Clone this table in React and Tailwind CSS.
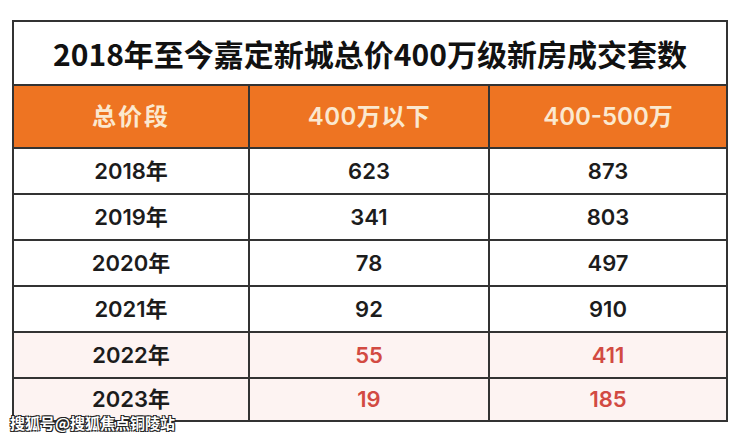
import React from "react";

const rows = [
  { y: "2018年", a: "623", b: "873" },
  { y: "2019年", a: "341", b: "803" },
  { y: "2020年", a: "78", b: "497" },
  { y: "2021年", a: "92", b: "910" },
  { y: "2022年", a: "55", b: "411", hl: true },
  { y: "2023年", a: "19", b: "185", hl: true, last: true },
];

const cellFont = { fontFamily: 'Inter, "Noto Sans CJK SC", sans-serif' };

export default function App() {
  return (
    <div
      className="relative w-[740px] h-[442px] bg-white overflow-hidden"
      style={{ fontFamily: '"Noto Sans CJK SC", "Noto Sans", sans-serif' }}
    >
      <div className="ml-[12px] mt-[20px] w-[716px] border-2 border-[#333]">
        <div className="h-[64px] flex items-center justify-center border-b-2 border-[#333] text-[30px] font-bold text-[#111]">
          2018年至今嘉定新城总价400万级新房成交套数
        </div>
        <div
          className="grid grid-cols-[236px_240px_236px] h-[63px] bg-[#ee7422] border-b-2 border-[#333] text-[24px] font-semibold text-[#fbe8cf]"
          style={cellFont}
        >
          <div className="flex items-center justify-center border-r-2 border-[#333] tracking-[2px]">总价段</div>
          <div className="flex items-center justify-center border-r-2 border-[#333] tracking-[0.5px]">400万以下</div>
          <div className="flex items-center justify-center">400-500万</div>
        </div>
        {rows.map((r) => (
          <div
            key={r.y}
            style={cellFont}
            className={`grid grid-cols-[236px_240px_236px] text-[22px] font-semibold ${
              r.last ? "h-[41px]" : "h-[46px] border-b-2 border-[#333]"
            } ${r.hl ? "bg-[#fdf3f2]" : "bg-white"}`}
          >
            <div className="flex items-center justify-center border-r-2 border-[#333] text-[#1c1c1c]">{r.y}</div>
            <div
              className={`flex items-center justify-center border-r-2 border-[#333] ${
                r.hl ? "text-[#d24a42]" : "text-[#1c1c1c]"
              }`}
            >
              {r.a}
            </div>
            <div className={`flex items-center justify-center ${r.hl ? "text-[#d24a42]" : "text-[#1c1c1c]"}`}>
              {r.b}
            </div>
          </div>
        ))}
      </div>
      <div
        className="absolute left-[10px] top-[415px] text-[15px] font-bold text-white leading-none"
        style={{ textShadow: "1px 1px 0 #222, -1px -1px 0 #222, 1px -1px 0 #222, -1px 1px 0 #222" }}
      >
        搜狐号@搜狐焦点铜陵站
      </div>
    </div>
  );
}
